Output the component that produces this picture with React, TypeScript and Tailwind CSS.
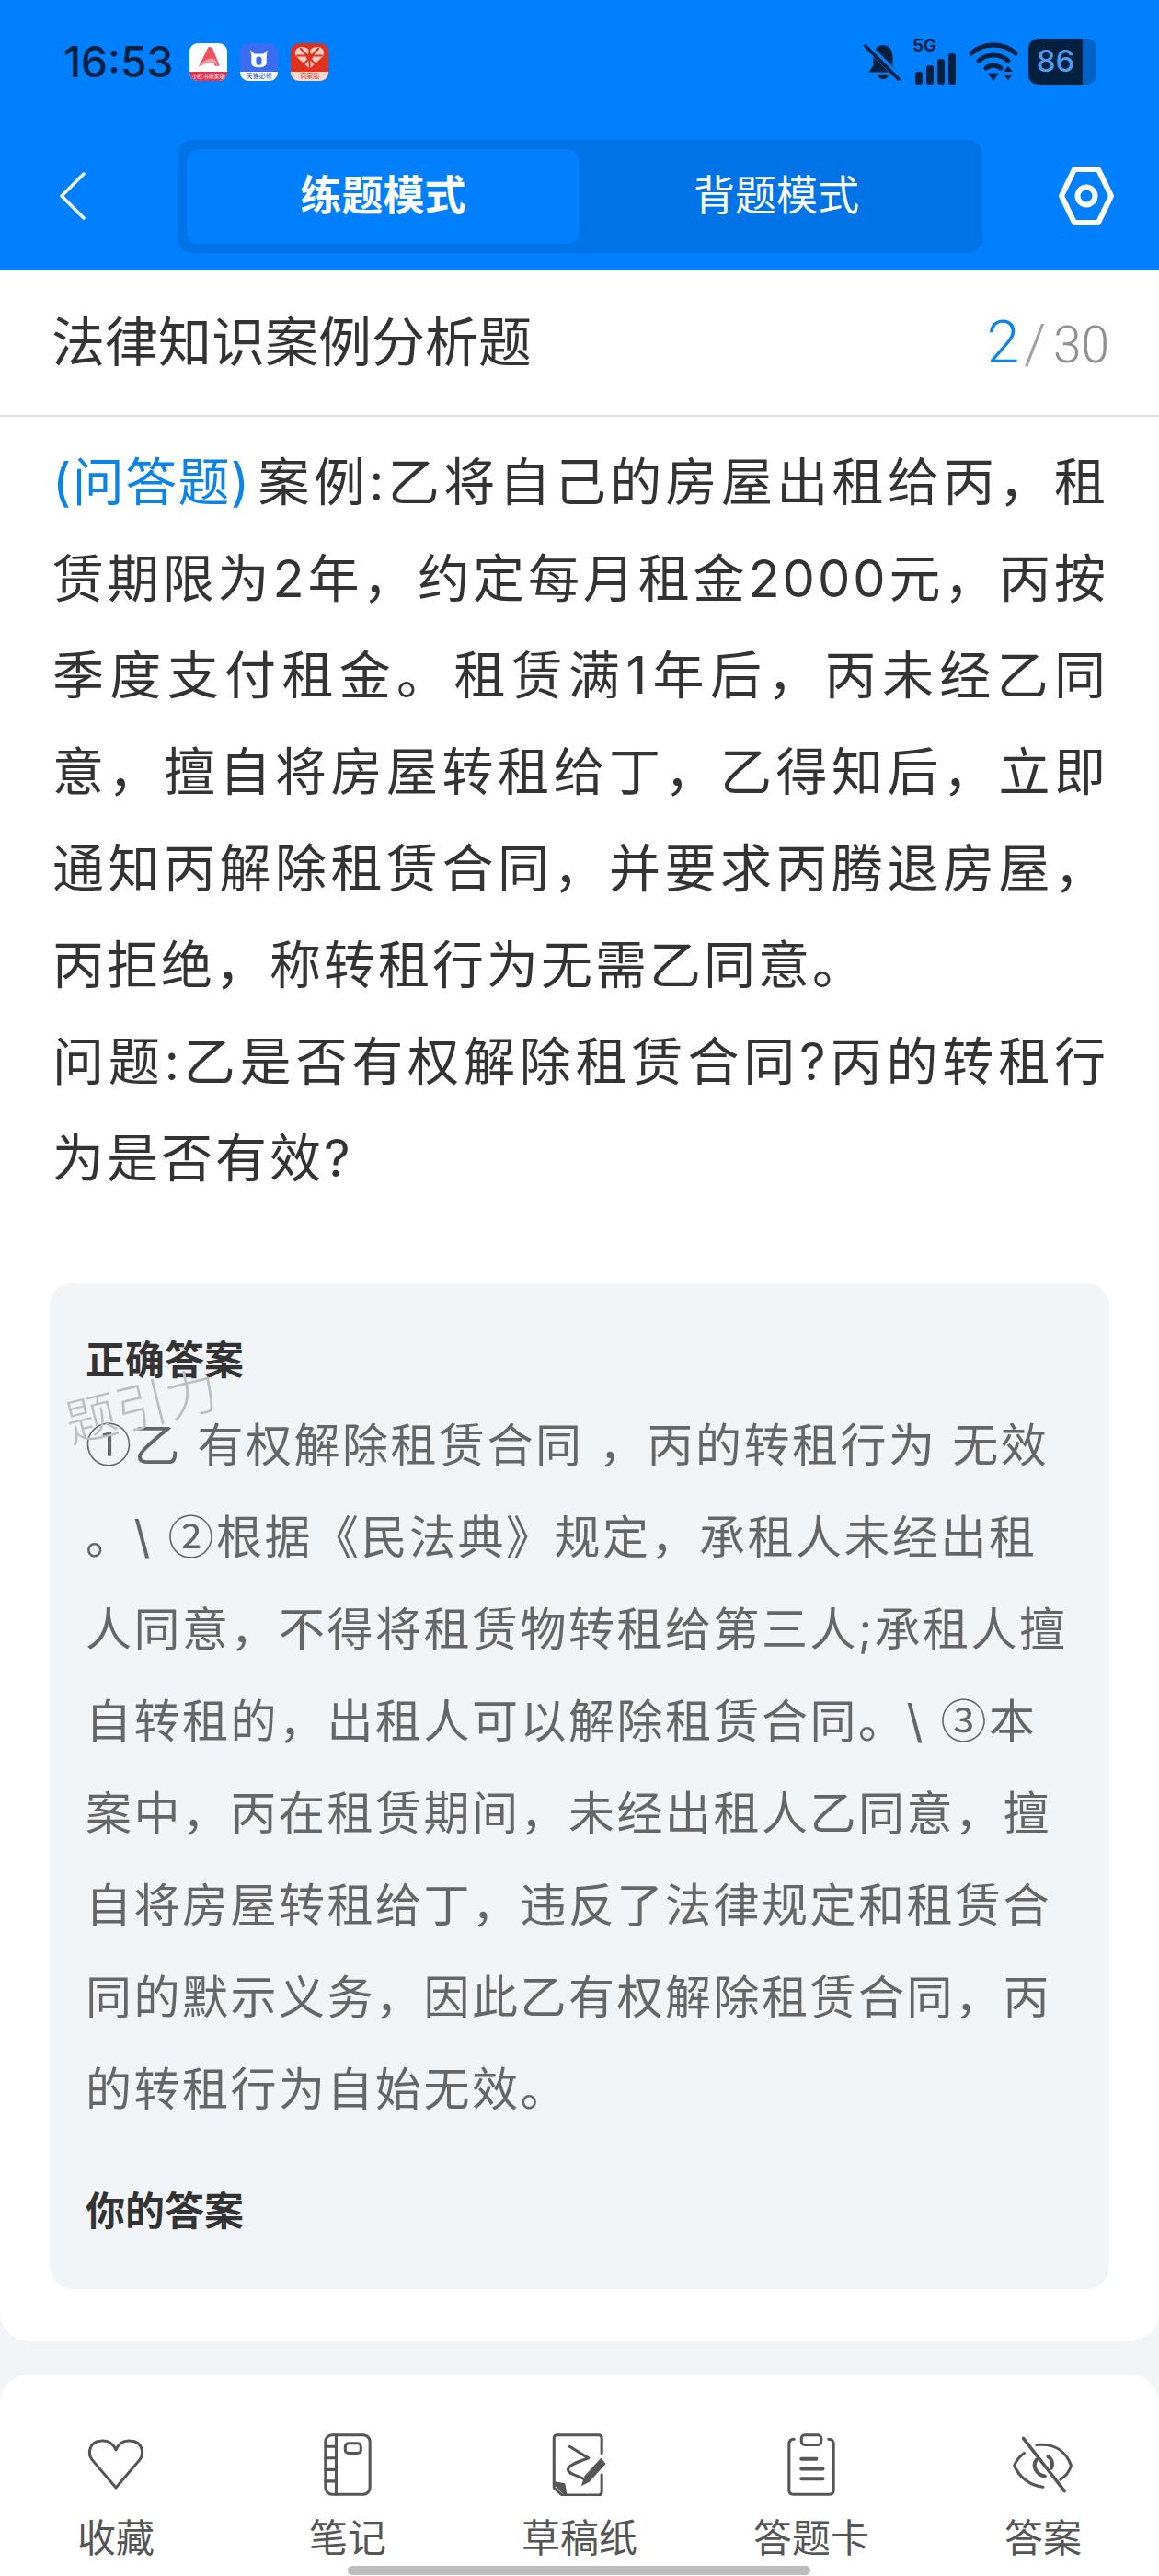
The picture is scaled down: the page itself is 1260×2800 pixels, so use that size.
const cjk = { fontFamily: '"Inter", "Noto Sans CJK SC", "Noto Sans", sans-serif' };

// the reference justifies every line of a paragraph except the last one
const questionLines = [
  { text: '案例:乙将自己的房屋出租给丙，租', justify: true },
  { text: '赁期限为2年，约定每月租金2000元，丙按', justify: true },
  { text: '季度支付租金。租赁满1年后，丙未经乙同', justify: true },
  { text: '意，擅自将房屋转租给丁，乙得知后，立即', justify: true },
  { text: '通知丙解除租赁合同，并要求丙腾退房屋，', justify: true },
  { text: '丙拒绝，称转租行为无需乙同意。', justify: false },
  { text: '问题:乙是否有权解除租赁合同?丙的转租行', justify: true },
  { text: '为是否有效?', justify: false },
];

const answerLines = [
  '①乙 有权解除租赁合同 ，丙的转租行为 无效',
  '。\\ ②根据《民法典》规定，承租人未经出租',
  '人同意，不得将租赁物转租给第三人;承租人擅',
  '自转租的，出租人可以解除租赁合同。\\ ③本',
  '案中，丙在租赁期间，未经出租人乙同意，擅',
  '自将房屋转租给丁，违反了法律规定和租赁合',
  '同的默示义务，因此乙有权解除租赁合同，丙',
  '的转租行为自始无效。',
];

function AppIcons() {
  return (
    <div className="flex items-center gap-[14px] ml-[18px]">
      <div className="w-[41px] h-[41px] rounded-[9px] bg-white overflow-hidden flex flex-col">
        <svg viewBox="0 0 40 30" className="w-[41px] h-[31px]">
          <path d="M9 26 L20 4 L24 4 L32 24 L27 24 C24 14 18 16 9 26Z" fill="#f0525f" />
          <path d="M14 20 C20 15 25 15 28 18 L30 24 C24 19 18 20 12 25Z" fill="#f89aa0" />
        </svg>
        <div className="h-[10px] bg-[#e8304a] text-white text-[6px] leading-[10px] text-center whitespace-nowrap">小红书商家版</div>
      </div>
      <div className="w-[41px] h-[41px] rounded-[9px] bg-[#3c6cf0] overflow-hidden flex flex-col">
        <svg viewBox="0 0 40 30" className="w-[41px] h-[31px]">
          <path d="M11 7 L15 11 L25 11 L29 7 L28 14 L28 21 C28 27 12 27 12 21 L12 14Z" fill="white" />
          <rect x="17" y="14" width="6" height="9" rx="3" fill="#3c6cf0" />
        </svg>
        <div className="h-[10px] bg-white text-[#2050c0] text-[7px] leading-[10px] text-center whitespace-nowrap">天猫必修</div>
      </div>
      <div className="w-[41px] h-[41px] rounded-[9px] bg-[#e0301e] overflow-hidden flex flex-col">
        <svg viewBox="0 0 40 30" className="w-[41px] h-[31px]">
          <path d="M20 27 L6 14 C2 8 8 3 13 4 C16 4 19 6 20 8 C21 6 24 4 27 4 C32 3 38 8 34 14Z" fill="#f8cfc4" />
          <path d="M20 6 V27 M6 13 H34 M10 5 L28 24 M30 5 L12 24" stroke="#e0301e" strokeWidth="2" />
          <circle cx="20" cy="14" r="3.5" fill="#e0301e" />
        </svg>
        <div className="h-[10px] bg-[#fbd9d2] text-[#d03020] text-[7px] leading-[10px] text-center whitespace-nowrap">商家版</div>
      </div>
    </div>
  );
}

function StatusIcons() {
  return (
    <div className="flex items-center gap-[11px] text-[#04203f]">
      <svg viewBox="0 0 40 40" className="w-[42px] h-[42px]" fill="#04203f">
        <path d="M20 3 C27 3 30 9 30 15 L30 24 L35 31 L5 31 L10 24 L10 15 C10 9 13 3 20 3Z" />
        <path d="M14 33 H26 C25 37 22 38 20 38 C18 38 15 37 14 33Z" />
        <path d="M3 3 L37 37" stroke="#0080ff" strokeWidth="7" />
        <path d="M2 4 L36 38" stroke="#04203f" strokeWidth="3.5" strokeLinecap="round" />
      </svg>
      <div className="relative w-[50px] h-[50px]">
        <span className="absolute left-0 top-[-3px] text-[19px] leading-[22px] font-bold tracking-[-0.5px]">5G</span>
        <div className="absolute left-[3px] bottom-0 flex items-end gap-[4px]">
          <div className="w-[8px] h-[14px] rounded-[3px] bg-[#04203f]" />
          <div className="w-[8px] h-[21px] rounded-[3px] bg-[#04203f]" />
          <div className="w-[8px] h-[28px] rounded-[3px] bg-[#04203f]" />
          <div className="w-[8px] h-[34px] rounded-[3px] bg-[#04203f]" />
        </div>
      </div>
      <svg viewBox="0 0 54 44" className="w-[54px] h-[44px]" fill="none" stroke="#04203f" strokeWidth="5" strokeLinecap="round">
        <path d="M3 13 C16 1 38 1 51 13" />
        <path d="M11 21 C20 13 34 13 43 21" />
        <path d="M19 29 C24 25 30 25 35 29" />
        <path d="M22 35 H32 L27 42Z" fill="#04203f" strokeWidth="1" />
        <path d="M43 27 L48 33 H38Z M38 36 H48 L43 42Z" fill="#04203f" stroke="none" />
      </svg>
      <div className="flex items-center h-[50px] w-[74px] rounded-[10px] bg-[#0062c4] overflow-hidden relative">
        <div className="w-[59px] h-full bg-[#04203f] rounded-l-[10px] flex items-center justify-center text-[33px] font-medium text-[#4c9cf0]">86</div>
      </div>
    </div>
  );
}

function NavIcon({ name }: { name: string }) {
  const common = { fill: 'none', stroke: '#555', strokeWidth: 3.4, strokeLinecap: 'round' as const, strokeLinejoin: 'round' as const };
  if (name === 'heart') {
    return (
      <svg viewBox="0 0 76 76" className="w-[68px] h-[68px]" {...common}>
        <path d="M38 66 L9 32 C3 24 6 10 20 9 C29 8 35 13 38 20 C41 13 47 8 56 9 C70 10 73 24 67 32Z" />
      </svg>
    );
  }
  if (name === 'note') {
    return (
      <svg viewBox="0 0 76 76" className="w-[68px] h-[68px]" {...common}>
        <rect x="11" y="2" width="54" height="72" rx="8" />
        <path d="M24 2 V74 M11 16 H24 M11 30 H24 M11 44 H24 M11 58 H24" />
        <rect x="35" y="12" width="19" height="12" rx="4" />
      </svg>
    );
  }
  if (name === 'draft') {
    return (
      <svg viewBox="0 0 76 76" className="w-[68px] h-[68px]" {...common}>
        <path d="M46 75 H17 L7 66 V6 Q7 2 11 2 H61 Q65 2 65 6 V24 M65 50 V71 Q65 75 61 75 H48" />
        <path d="M7 60 L19 62 L21 74Z" fill="#555" />
        <path d="M26 16 L49 30 C38 34 24 38 24 44 C24 50 40 52 44 56" />
        <path d="M40 64 L44 52 L64 30 L70 37 L50 59Z" fill="#555" stroke="none" />
      </svg>
    );
  }
  if (name === 'card') {
    return (
      <svg viewBox="0 0 76 76" className="w-[68px] h-[68px]" {...common}>
        <path d="M17 7 Q11 7 11 13 V69 Q11 74 16 74 H60 Q65 74 65 69 V13 Q65 7 59 7" />
        <rect x="26" y="2" width="24" height="12" rx="4" />
        <path d="M26 31 H44 M26 43 H52 M26 55 H52" strokeWidth="4.5" />
      </svg>
    );
  }
  return (
    <svg viewBox="0 0 76 76" className="w-[68px] h-[68px]" {...common}>
      <path d="M15 24 C9 28 5 34 3 39 C8 52 22 64 38 65 M59 56 C66 52 70 46 72 39 C66 22 52 12 30 14" />
      <path d="M14 6 L64 70" strokeWidth="3.8" />
      <path d="M30 32 C24 40 30 50 40 52 M44 28 C50 32 50 38 48 42" strokeWidth="4.5" />
    </svg>
  );
}

const navItems = [
  { icon: 'heart', label: '收藏' },
  { icon: 'note', label: '笔记' },
  { icon: 'draft', label: '草稿纸' },
  { icon: 'card', label: '答题卡' },
  { icon: 'eye', label: '答案' },
];

// Inter's circled digits are far too big, these come from the CJK font
function AnswerLine({ text }: { text: string }) {
  return (
    <div>
      {text.split(/([①②③])/).map((part, i) =>
        i % 2 === 1 ? (
          <span key={i} className="font-['Noto_Sans_CJK_SC'] leading-none">{part}</span>
        ) : (
          part
        ),
      )}
    </div>
  );
}

export default function App() {
  return (
    <div className="relative w-[1260px] h-[2800px] bg-[#f1f5f8] overflow-hidden flex flex-col" style={cjk}>
      <header className="h-[294px] bg-[#0080ff] shrink-0">
        <div className="h-[134px] flex items-center justify-between pl-[69px] pr-[68px]">
          <div className="flex items-center">
            <span className="text-[46px] font-medium text-[#04203f]">16:53</span>
            <AppIcons />
          </div>
          <StatusIcons />
        </div>
        <div className="h-[158px] flex items-center">
          <div className="w-[193px] pl-[64px]">
            <svg viewBox="0 0 30 52" className="w-[30px] h-[52px]" fill="none" stroke="white" strokeWidth="3.5" strokeLinecap="round" strokeLinejoin="round">
              <path d="M27 2 L3 26 L27 50" />
            </svg>
          </div>
          <div className="w-[875px] h-[123px] rounded-[16px] bg-[#0073e6] p-[10px] flex">
            <div className="w-[427px] rounded-[14px] bg-[#0080ff] flex items-center justify-center text-[45px] leading-[60px] font-bold text-white">练题模式</div>
            <div className="flex-1 flex items-center justify-center text-[45px] leading-[60px] text-white">背题模式</div>
          </div>
          <div className="pl-[83px]">
            <svg viewBox="0 0 60 64" className="w-[60px] h-[64px]" fill="none" stroke="white" strokeWidth="6" strokeLinejoin="round">
              <path d="M17 3 H43 L57 32 L43 61 H17 L3 32Z" />
              <circle cx="30" cy="32" r="9.5" />
            </svg>
          </div>
        </div>
      </header>

      <div className="h-[159px] shrink-0 bg-white border-b-2 border-[#e2e4e6] flex items-center justify-between pl-[56px] pr-[54px]">
        <span className="text-[58px] text-[#333]">法律知识案例分析题</span>
        <div className="flex items-baseline font-[Roboto]">
          <span className="text-[64px] font-light text-[#0a84ea]">2</span>
          <span className="text-[60px] font-light text-[#a0a0a0] ml-[5px] mr-[8px]">/</span>
          <span className="text-[55px] font-light text-[#909090]">30</span>
        </div>
      </div>

      <main className="h-[2092px] shrink-0 bg-white rounded-b-[32px] px-[55px] pt-[19px]">
        <div className="text-[56px] leading-[105px] tracking-[3px] text-[#333] whitespace-nowrap pl-[2px]">
          {questionLines.map((line, i) => (
            <div key={i} className={line.justify ? '[text-align-last:justify]' : ''}>
              {i === 0 && <span className="text-[#0a84ea] tracking-normal mr-[8px]">(问答题)</span>}
              {line.text}
            </div>
          ))}
        </div>
        <section className="relative mt-[83px] -mx-[1px] h-[1093px] bg-[#f1f5f8] rounded-[24px] pt-[57px] pl-[39px]">
          <h3 className="text-[43px] leading-[52px] font-bold text-[#333]">正确答案</h3>
          <div className="mt-[17px] text-[50px] leading-[100px] tracking-[2.5px] text-[#666] whitespace-nowrap">
            {answerLines.map((line, i) => (
              <AnswerLine key={i} text={line} />
            ))}
          </div>
          <h3 className="mt-[56px] text-[43px] leading-[52px] font-bold text-[#333]">你的答案</h3>
          <span className="absolute left-[16px] top-[104px] text-[56px] leading-[60px] font-light text-[#bcbfc2] rotate-[-14deg]">题引力</span>
        </section>
      </main>

      <nav className="mt-[36px] flex-1 bg-white rounded-t-[32px] grid grid-cols-5 pt-[64px]">
        {navItems.map((item) => (
          <div key={item.label} className="flex flex-col items-center">
            <NavIcon name={item.icon} />
            <span className="mt-[18px] text-[42px] leading-[56px] text-[#555]">{item.label}</span>
          </div>
        ))}
      </nav>

      <div className="absolute left-[378px] bottom-[1px] w-[503px] h-[10px] rounded-full bg-[#bdbdbd]" />
    </div>
  );
}
